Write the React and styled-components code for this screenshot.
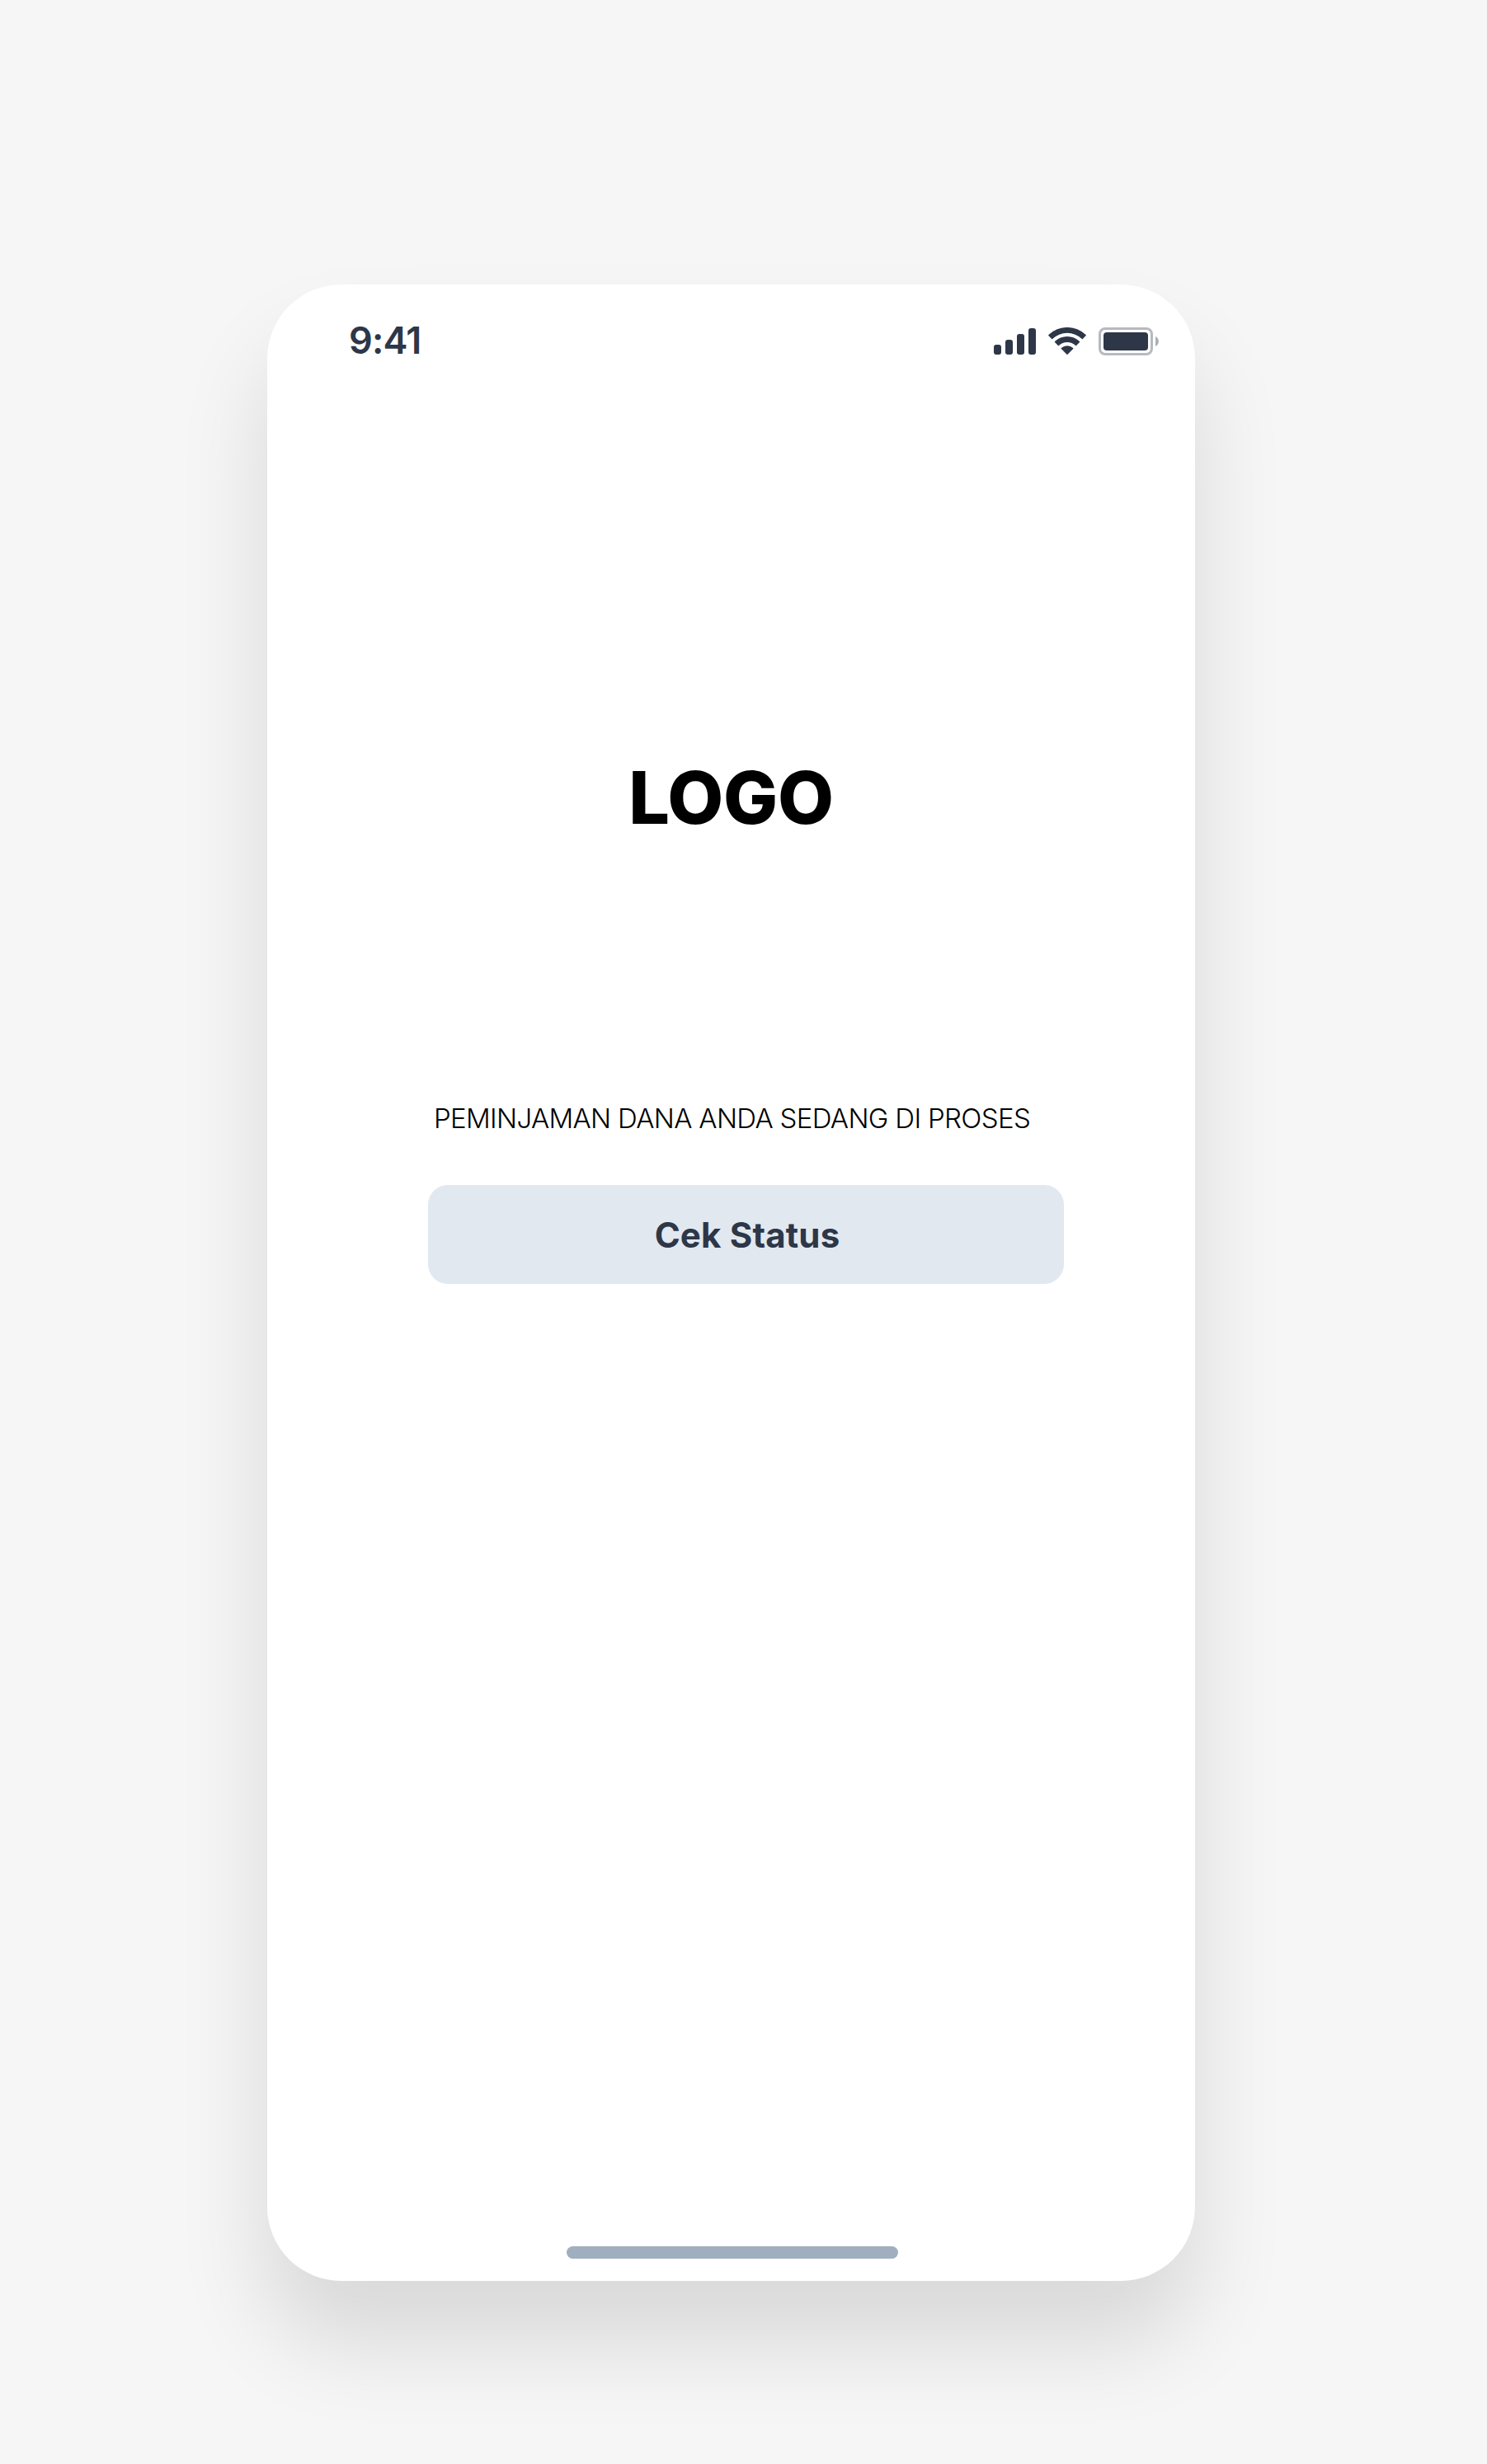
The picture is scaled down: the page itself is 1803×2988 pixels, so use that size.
import React from "react";
import styled, { createGlobalStyle } from "styled-components";

const ink = "#2d3748";

const GlobalStyle = createGlobalStyle`
  *, *::before, *::after { box-sizing: border-box; }
  body { margin: 0; background: #f6f6f6; font-family: Inter, "Liberation Sans", sans-serif; }
`;

const Stage = styled.main`
  height: 2988px;
  padding: 345px 0 0 324px;
  background: #f6f6f6;
  overflow: hidden;
`;

const Phone = styled.section`
  display: flex;
  flex-direction: column;
  align-items: flex-start;
  width: 1125px;
  height: 2421px;
  border-radius: 90px;
  background: #fff;
  box-shadow: 0 75px 112px rgba(0, 0, 0, 0.12);
`;

const StatusBar = styled.header`
  display: flex;
  justify-content: space-between;
  align-items: flex-start;
  width: 100%;
  height: 132px;
  padding: 52px 44px 0 99px;
  color: ${ink};
`;

const Time = styled.time`
  margin-top: -11px;
  font-size: 45px;
  font-weight: 600;
  line-height: 54px;
  letter-spacing: -0.8px;
`;

const Indicators = styled.div`
  display: flex;
  align-items: flex-start;
  gap: 15px;
`;

const Glyph = styled.svg`
  display: block;
  width: ${(p) => p.$width}px;
  height: 34px;
`;

const Logo = styled.h1`
  align-self: center;
  margin: 430px 0 0;
  font-size: 88px;
  font-weight: 800;
  line-height: 120px;
  letter-spacing: -0.2px;
  color: #000;
`;

const Message = styled.p`
  margin: 305px 0 0 202px;
  font-size: 33px;
  font-weight: 300;
  line-height: 48px;
  letter-spacing: -0.66px;
  white-space: nowrap;
  color: #000;
`;

const StatusButton = styled.button`
  width: 771px;
  height: 120px;
  margin: 57px 0 0 195px;
  padding: 2px 0 0 3px;
  border: 0;
  border-radius: 24px;
  background: #e2e8f0;
  color: ${ink};
  font: 700 42px/60px Inter, "Liberation Sans", sans-serif;
  letter-spacing: 0.18px;
`;

const HomeBar = styled.div`
  width: 402px;
  height: 15px;
  margin: auto 0 27px 363px;
  border-radius: 7.5px;
  background: #a0aec0;
`;

const Signal = () => (
  <Glyph $width={51} viewBox="0 0 51 34" fill={ink} aria-hidden="true">
    <rect x="0" y="21" width="9" height="12" rx="3" />
    <rect x="14" y="15" width="9" height="18" rx="3" />
    <rect x="28" y="8" width="9" height="25" rx="3" />
    <rect x="42" y="1" width="9" height="32" rx="3" />
  </Glyph>
);

const Wifi = () => (
  <Glyph $width={46} viewBox="0 0 46 34" fill={ink} aria-hidden="true">
    <path d="M.4 9.1Q-.1 9.6.4 10.1L4.1 14Q4.6 14.5 5.1 14A26 26 0 0 1 40.9 14Q41.4 14.5 41.9 14L45.6 10.1Q46.1 9.6 45.6 9.1A32.5 32.5 0 0 0 .4 9.1Z" />
    <path d="M8 17Q7.5 17.5 8 18L11.9 21.9Q12.4 22.4 12.9 21.9A15 15 0 0 1 33.1 21.9Q33.6 22.4 34.1 21.9L38 18Q38.5 17.5 38 17A21.7 21.7 0 0 0 8 17Z" />
    <path d="M15.8 25.1Q15.3 25.6 15.8 26.1L22.5 32.8Q23 33.3 23.5 32.8L30.2 26.1Q30.7 25.6 30.2 25.1A10.8 10.8 0 0 0 15.8 25.1Z" />
  </Glyph>
);

const Battery = () => (
  <Glyph $width={73} viewBox="0 0 73 34" aria-hidden="true">
    <rect x="1.5" y="1.5" width="63" height="31" rx="6.5" fill="none" stroke={ink} strokeOpacity="0.35" strokeWidth="3" />
    <rect x="6" y="6" width="54" height="22" rx="4" fill={ink} />
    <path d="M69 11v12a6.6 6.6 0 0 0 0-12Z" fill={ink} fillOpacity="0.4" />
  </Glyph>
);

export default function App() {
  return (
    <>
      <GlobalStyle />
      <Stage>
        <Phone>
          <StatusBar>
            <Time>9:41</Time>
            <Indicators>
              <Signal />
              <Wifi />
              <Battery />
            </Indicators>
          </StatusBar>
          <Logo>LOGO</Logo>
          <Message>PEMINJAMAN DANA ANDA SEDANG DI PROSES</Message>
          <StatusButton type="button">Cek Status</StatusButton>
          <HomeBar />
        </Phone>
      </Stage>
    </>
  );
}
